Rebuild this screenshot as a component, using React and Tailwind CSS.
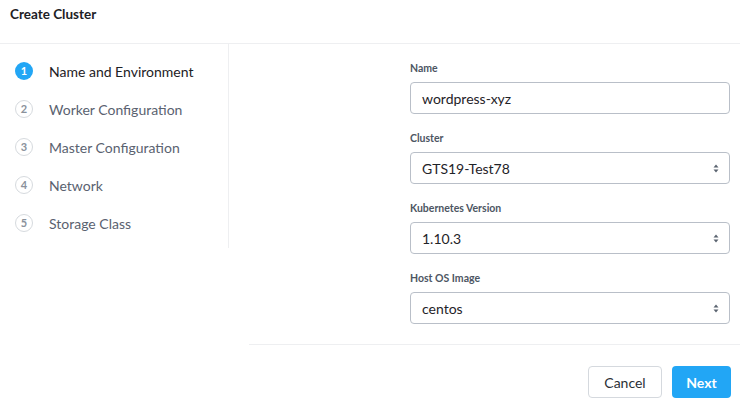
import React from "react";

const steps = [
  "Name and Environment",
  "Worker Configuration",
  "Master Configuration",
  "Network",
  "Storage Class",
];

function Arrows() {
  return (
    <svg width="6" height="9" viewBox="0 0 6 9" className="shrink-0">
      <path d="M3 0.5 L5.5 3.5 H0.5 Z" fill="#5b6470" />
      <path d="M3 8.5 L5.5 5.5 H0.5 Z" fill="#5b6470" />
    </svg>
  );
}

function Field({ label, value, select }) {
  return (
    <div className="flex flex-col">
      <div className="text-[10.5px] leading-[14px] font-bold text-[#4d5663] mb-[7px]">{label}</div>
      <div className="h-[32px] rounded-[4px] border border-[#b9bfc8] flex items-center pl-[11px] pr-[10px] justify-between">
        <span className="text-[14px] text-[#1f2328]">{value}</span>
        {select && <Arrows />}
      </div>
    </div>
  );
}

export default function App() {
  return (
    <div className="w-[740px] h-[406px] bg-white overflow-hidden" style={{ fontFamily: "Lato, 'Open Sans', sans-serif" }}>
      <div className="h-[44px] border-b border-[#eeeff1] flex items-start pl-[10px] pt-[5px]">
        <span className="text-[13.5px] leading-[18px] font-bold text-[#1d2125]">Create Cluster</span>
      </div>
      <div className="flex">
        <div className="w-[229px] h-[204px] border-r border-[#eeeff1] pt-[8px] pl-[15px] flex flex-col">
          {steps.map((s, i) => (
            <div key={s} className="h-[38px] flex items-center gap-[16px]">
              {i === 0 ? (
                <div className="w-[18px] h-[18px] rounded-full bg-[#22a6f5] text-white text-[11px] font-bold flex items-center justify-center">1</div>
              ) : (
                <div className="w-[18px] h-[18px] rounded-full border border-[#d6dade] text-[#8a919b] text-[11px] font-bold flex items-center justify-center">{i + 1}</div>
              )}
              <span className={i === 0 ? "text-[14px] text-[#1d2125]" : "text-[14px] text-[#5a6270]"}>{s}</span>
            </div>
          ))}
        </div>
        <div className="flex-1 flex flex-col">
          <div className="flex justify-end pr-[10px] pt-[17px]">
            <div className="w-[320px] flex flex-col gap-[17px]">
              <Field label="Name" value="wordpress-xyz" />
              <Field label="Cluster" value="GTS19-Test78" select />
              <Field label="Kubernetes Version" value="1.10.3" select />
              <Field label="Host OS Image" value="centos" select />
            </div>
          </div>
          <div className="ml-[20px] mt-[20px] border-t border-[#eeeff1]" />
          <div className="flex justify-end gap-[10px] pr-[9px] pt-[21px]">
            <button className="w-[74px] h-[32px] rounded-[4px] border border-[#d5d9de] bg-white text-[14px] text-[#2a2f35]">Cancel</button>
            <button className="w-[59px] h-[32px] rounded-[4px] bg-[#22a6f5] text-[14px] font-bold text-white">Next</button>
          </div>
        </div>
      </div>
    </div>
  );
}
